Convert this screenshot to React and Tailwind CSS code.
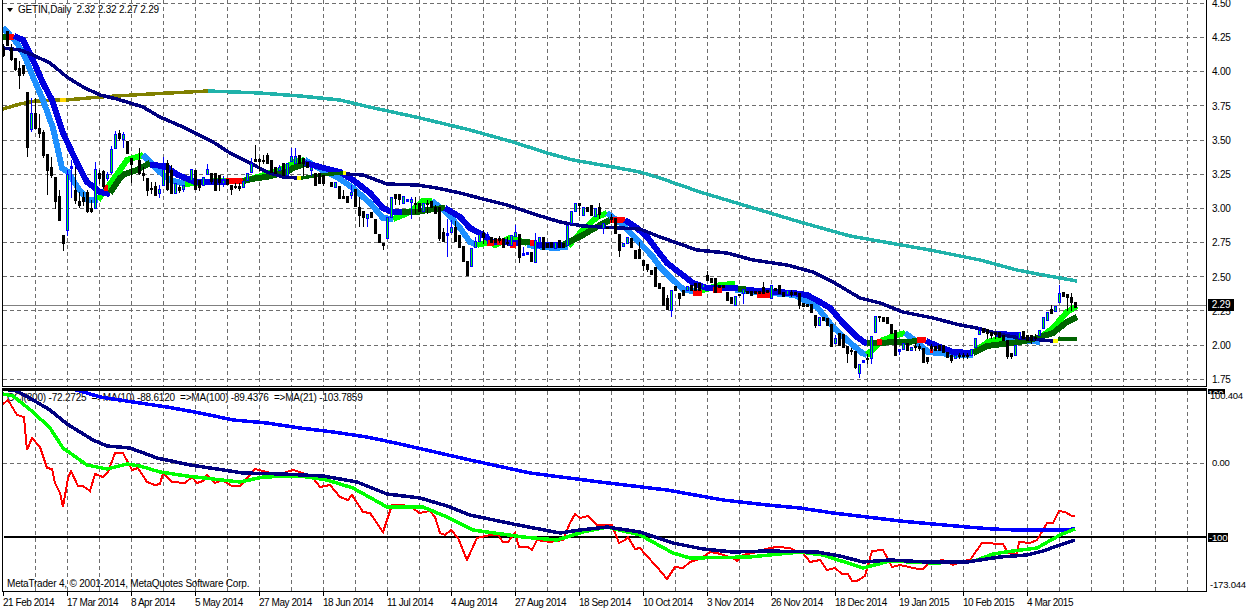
// GETIN daily chart (MetaTrader 4). All chart data is in page pixels.
const font = { fontFamily: '"Liberation Sans", sans-serif' }

const BLUE = "#0000e0"
const SKY = "#1e90ff"
const LIME = "#00ff00"
const GREEN = "#006400"
const RED = "#ff0000"
const NAVY = "#000080"

const fastBand = [
    [SKY, [[3, 28], [8, 33], [17, 43], [25, 57], [33, 77], [43, 100], [53, 128], [62, 168], [68, 172], [78, 188], [88, 200], [98, 200]]],
    [LIME, [[98, 200], [100, 197], [113, 180], [127, 160], [143, 155]]],
    [SKY, [[143, 155], [153, 165], [160, 172], [170, 180], [185, 184]]],
    [LIME, [[185, 184], [215, 181], [240, 181], [248, 180], [280, 170], [295, 162], [305, 160]]],
    [SKY, [[305, 160], [322, 170], [337, 177], [353, 188], [370, 203], [383, 218], [393, 219]]],
    [LIME, [[393, 219], [410, 212], [423, 201], [432, 201]]],
    [SKY, [[432, 201], [447, 213], [460, 228], [470, 242], [477, 245]]],
    [LIME, [[477, 245], [490, 242], [495, 245], [510, 238], [527, 243]]],
    [SKY, [[527, 245], [553, 248], [568, 247]]],
    [LIME, [[568, 246], [583, 230], [597, 217], [607, 213]]],
    [SKY, [[607, 213], [623, 225], [637, 240], [653, 257], [660, 267], [673, 280], [683, 289], [700, 293]]],
    [LIME, [[700, 291], [720, 285], [735, 284]]],
    [SKY, [[735, 290], [795, 295], [817, 307], [833, 327], [847, 340], [862, 353], [867, 355]]],
    [LIME, [[867, 355], [883, 340], [897, 335], [905, 333]]],
    [SKY, [[905, 333], [917, 342], [928, 352], [960, 355], [973, 355]]],
    [LIME, [[973, 353], [988, 342], [1005, 337]]],
    [SKY, [[1005, 338], [1040, 342]]],
    [LIME, [[1040, 338], [1053, 328], [1067, 312], [1077, 306]]],
]

const slowBand = [
    [GREEN, [[3, 37], [9, 37]]],
    [RED, [[9, 37], [14, 37]]],
    [BLUE, [[14, 36], [23, 40], [33, 60], [43, 83], [52, 100], [63, 133], [77, 163], [87, 182], [100, 192], [110, 194]]],
    [RED, [[104, 188], [108, 188]]],
    [GREEN, [[110, 193], [120, 178], [125, 174], [137, 170], [150, 163]]],
    [BLUE, [[150, 165], [165, 166], [178, 175], [195, 182], [226, 182]]],
    [RED, [[226, 181], [243, 181]]],
    [GREEN, [[243, 181], [257, 178], [267, 177], [287, 172], [293, 168], [305, 164]]],
    [BLUE, [[305, 163], [320, 167], [340, 172], [353, 180], [370, 193], [383, 208], [392, 212], [402, 212]]],
    [GREEN, [[402, 212], [417, 212], [433, 209], [445, 208]]],
    [BLUE, [[445, 208], [460, 217], [470, 228], [483, 235], [493, 242], [520, 243]]],
    [RED, [[487, 243], [494, 243]]],
    [RED, [[497, 242], [502, 242]]],
    [RED, [[510, 245], [516, 245]]],
    [GREEN, [[518, 242], [530, 242]]],
    [RED, [[530, 243], [537, 243]]],
    [BLUE, [[537, 245], [563, 245]]],
    [GREEN, [[563, 245], [583, 235], [600, 225], [610, 220]]],
    [RED, [[610, 220], [625, 220]]],
    [BLUE, [[625, 220], [637, 228], [648, 238], [657, 250], [667, 263], [680, 273], [693, 283], [707, 288], [738, 288]]],
    [RED, [[693, 293], [702, 293]]],
    [RED, [[713, 290], [722, 290]]],
    [GREEN, [[738, 289], [746, 289]]],
    [BLUE, [[746, 290], [793, 293], [807, 295], [820, 302], [830, 308], [843, 323], [857, 337], [867, 344]]],
    [RED, [[757, 295], [772, 295]]],
    [GREEN, [[867, 343], [907, 342], [917, 341]]],
    [RED, [[877, 342], [882, 342]]],
    [RED, [[917, 340], [926, 340]]],
    [BLUE, [[926, 341], [940, 347], [953, 352], [973, 353]]],
    [RED, [[930, 350], [933, 350]]],
    [BLUE, [[995, 334], [1018, 335]]],
    [GREEN, [[973, 353], [987, 346], [1003, 344], [1020, 342], [1037, 338], [1053, 333], [1067, 322], [1077, 317]]],
]

const navyMa = [
    [NAVY, [[3, 48], [20, 50], [33, 55], [50, 63], [67, 77], [83, 87], [100, 95], [117, 99], [143, 107], [160, 117], [183, 127], [213, 142], [230, 153], [250, 163], [267, 172], [283, 177], [297, 178]]],
    ["#ffff00", [[297, 178], [301, 178]]],
    [GREEN, [[301, 178], [320, 175], [343, 173]]],
    ["#ffff00", [[343, 173], [346, 173]]],
    [NAVY, [[346, 174], [363, 175], [387, 184], [417, 185], [437, 188], [460, 193], [487, 200], [507, 205], [537, 215], [560, 222], [583, 226], [620, 228], [640, 229], [660, 237], [697, 250], [727, 253], [753, 260], [787, 265], [813, 272], [833, 282], [860, 298], [880, 303], [903, 312], [933, 318], [960, 325], [977, 328], [1003, 335], [1020, 338], [1053, 341]]],
    ["#ffff00", [[1053, 341], [1058, 341]]],
    [GREEN, [[1058, 339], [1077, 339]]],
]

const longMa = [
    ["#808000", [[3, 109], [20, 104], [35, 101], [60, 100]]],
    ["#ffd700", [[60, 100], [66, 100]]],
    ["#808000", [[66, 100], [100, 97], [150, 94], [208, 91]]],
    ["#20b2aa", [[208, 91], [260, 93], [300, 96], [340, 100], [365, 106], [420, 118], [470, 130], [513, 142], [547, 153], [573, 160], [613, 167], [640, 172], [660, 178], [700, 192], [750, 207], [800, 222], [850, 236], [930, 250], [980, 260], [1017, 270], [1043, 275], [1077, 281]]],
]

// [x, bodyTop, bodyBottom, wickTop, wickBottom, up]
const candles = [
    [3, 48, 55, 44, 56], [7, 31, 45], [11, 48, 59, 44, 60], [15, 58, 69, 58, 70], [19, 68, 75, 61, 88], [23, 65, 73, 65, 75],
    [27, 92, 147, 92, 156], [31, 113, 129, 98, 131, 1], [35, 113, 128, 98, 128], [39, 128, 133, 114, 137], [43, 132, 155, 130, 157], [47, 154, 170, 154, 194],
    [51, 167, 175, 157, 177], [55, 177, 201, 177, 208], [59, 196, 220, 190, 220], [63, 235, 243, 235, 250], [67, 174, 230, 170, 235, 1], [71, 166, 168, 160, 197, 1],
    [75, 190, 200, 167, 203], [79, 201, 205, 192, 207], [83, 197, 201, 192, 205], [87, 192, 211, 190, 212], [91, 208, 211, 200, 212], [95, 169, 208, 162, 208, 1],
    [99, 173, 178, 170, 183], [103, 171, 186, 170, 188], [107, 174, 178, 172, 180, 1], [111, 149, 172, 146, 173, 1], [115, 134, 148, 131, 148, 1], [119, 133, 138, 130, 140],
    [123, 134, 139, 132, 147, 1], [127, 141, 153], [131, 158, 164, 158, 182], [139, 160, 173, 148, 174], [143, 173, 175, 167, 180], [147, 178, 190, 178, 195],
    [151, 188, 189, 182, 193], [155, 186, 195, 182, 195], [159, 189, 193, 185, 197, 1], [163, 169, 185, 157, 185, 1], [167, 163, 189, 160, 190], [171, 170, 193, 165, 193],
    [175, 183, 193, 183, 193, 1], [179, 187, 190, 185, 192], [183, 185, 189, 185, 191, 1], [191, 169, 180, 169, 180, 1], [195, 170, 189], [199, 180, 187, 180, 190],
    [203, 177, 185, 177, 185, 1], [207, 169, 174, 164, 174, 1], [211, 173, 181, 173, 183], [215, 173, 190], [219, 175, 182, 175, 190], [223, 180, 183, 176, 186, 1],
    [227, 179, 184], [231, 185, 189, 185, 194], [235, 186, 187, 183, 188], [239, 186, 188, 183, 190], [243, 181, 187, 181, 187, 1], [247, 173, 180, 173, 180, 1],
    [251, 163, 172, 158, 172, 1], [255, 159, 161, 145, 161], [259, 159, 161, 158, 170], [263, 160, 161, 155, 163], [267, 155, 163, 153, 163], [271, 160, 172],
    [275, 167, 173], [279, 167, 170, 165, 170, 1], [283, 163, 175], [287, 163, 175, 163, 175, 1], [291, 156, 161, 148, 161, 1], [295, 156, 163, 148, 163, 1],
    [299, 155, 163], [303, 158, 163, 158, 175], [307, 162, 167], [311, 167, 170, 167, 175, 1], [315, 173, 185], [319, 173, 183], [323, 175, 183, 175, 185],
    [331, 182, 186], [335, 182, 187, 182, 187, 1], [339, 186, 198], [343, 196, 198, 190, 198], [347, 196, 202], [351, 192, 195, 185, 198, 1], [355, 189, 206],
    [359, 207, 215, 197, 226], [363, 211, 217, 211, 226], [367, 214, 218, 214, 226, 1], [371, 212, 217], [375, 219, 233], [379, 234, 242], [383, 243, 245, 243, 249],
    [387, 217, 238, 217, 238, 1], [391, 197, 217, 197, 217, 1], [395, 194, 198, 194, 204], [399, 194, 199, 194, 204], [403, 196, 203, 196, 203, 1], [407, 199, 201, 199, 201, 1],
    [411, 199, 202, 197, 218, 1], [415, 203, 204, 197, 213], [419, 203, 211], [423, 203, 211, 203, 211, 1], [427, 203, 204, 200, 213], [431, 201, 207], [435, 207, 213, 205, 213],
    [439, 207, 238, 207, 240], [443, 232, 241, 228, 241], [447, 233, 235, 219, 256, 1], [451, 227, 232, 220, 232, 1], [455, 227, 241, 221, 241], [459, 235, 247], [463, 246, 261],
    [467, 261, 275], [471, 248, 266, 248, 266, 1], [475, 241, 247, 237, 247, 1], [479, 234, 241, 234, 241, 1], [483, 233, 237, 230, 243], [487, 234, 236, 232, 243, 1],
    [491, 237, 242], [495, 238, 242], [499, 238, 240, 236, 242], [503, 238, 247], [507, 242, 243, 237, 245], [511, 235, 245, 235, 245, 1], [515, 232, 236, 225, 236, 1],
    [519, 234, 257, 234, 262], [523, 253, 255, 247, 255, 1], [527, 252, 254, 252, 254, 1], [531, 252, 261], [535, 240, 262, 233, 262, 1], [539, 237, 242, 237, 248, 1],
    [543, 237, 249], [547, 243, 247], [551, 242, 247], [555, 242, 248, 242, 248, 1], [559, 240, 247], [563, 243, 247], [567, 225, 245, 225, 245, 1], [571, 211, 223, 211, 223, 1],
    [575, 203, 211, 203, 211, 1], [579, 203, 205, 203, 215], [583, 207, 215, 207, 215, 1], [587, 207, 211], [591, 205, 215], [595, 208, 216, 208, 216, 1], [599, 207, 214, 203, 218],
    [603, 223, 228, 223, 233, 1], [607, 227, 228], [611, 217, 219, 214, 222], [615, 218, 233], [619, 234, 250, 234, 256], [623, 243, 246, 243, 246, 1], [627, 237, 243, 237, 243, 1],
    [631, 238, 247], [635, 250, 258], [639, 249, 258, 242, 258], [643, 260, 265, 260, 270], [647, 264, 269, 264, 271], [651, 270, 274], [655, 267, 286], [659, 283, 288],
    [663, 287, 305], [667, 298, 309, 295, 309], [671, 290, 310, 290, 316, 1], [675, 286, 290], [679, 293, 298, 293, 305], [683, 290, 295], [687, 286, 290, 286, 290, 1],
    [691, 285, 290], [695, 283, 290], [699, 283, 290], [703, 284, 287, 284, 287, 1], [707, 275, 280, 271, 280], [711, 278, 282], [715, 278, 292], [719, 285, 287],
    [723, 285, 287], [727, 292, 300], [731, 297, 303], [735, 296, 305, 296, 305, 1], [739, 294, 295], [743, 289, 293, 289, 303, 1], [747, 291, 293], [751, 291, 295],
    [755, 291, 293], [759, 291, 293], [763, 287, 293, 282, 293], [767, 290, 292], [771, 285, 298, 285, 298, 1], [775, 288, 290], [779, 285, 293], [783, 292, 296], [787, 290, 294, 290, 294, 1],
    [791, 292, 294, 290, 296], [795, 292, 294], [799, 293, 305, 293, 308], [803, 303, 306], [807, 304, 306], [811, 304, 312], [815, 315, 325, 315, 327], [819, 317, 325, 317, 325, 1],
    [823, 317, 320], [827, 318, 325], [831, 324, 346], [835, 338, 343, 335, 343, 1], [839, 333, 345], [843, 334, 347], [847, 346, 353, 346, 362], [851, 350, 351, 348, 354],
    [855, 351, 367, 351, 368], [859, 364, 373, 364, 377, 1], [863, 360, 362, 360, 362, 1], [867, 358, 359, 354, 363], [871, 336, 358, 336, 363, 1], [875, 316, 332, 316, 332, 1],
    [879, 316, 317, 316, 321], [883, 317, 321], [887, 317, 323], [891, 324, 333], [895, 330, 355], [899, 349, 351, 349, 354, 1], [903, 343, 349, 343, 349, 1], [907, 343, 350],
    [911, 347, 350, 347, 350, 1], [915, 346, 347, 343, 350], [919, 346, 348, 344, 350], [923, 348, 362], [927, 357, 361, 357, 363], [931, 346, 348, 344, 350], [935, 346, 350],
    [939, 345, 350], [943, 345, 352], [947, 352, 357], [951, 355, 360, 355, 362], [955, 355, 358, 355, 358, 1], [959, 355, 356, 353, 358], [963, 355, 356, 353, 358], [967, 355, 356, 353, 358],
    [971, 349, 355, 349, 355, 1], [975, 338, 347, 338, 347, 1], [979, 330, 334, 327, 334, 1], [983, 328, 332], [987, 329, 333, 329, 338], [991, 332, 335, 332, 338], [995, 332, 334, 332, 338],
    [999, 332, 337], [1003, 335, 340], [1007, 340, 356, 340, 358], [1011, 353, 356, 353, 358], [1015, 345, 355, 345, 355, 1], [1019, 332, 338, 332, 338, 1], [1023, 331, 338], [1027, 335, 340],
    [1031, 335, 340, 335, 343], [1035, 337, 338, 334, 340], [1039, 330, 335, 330, 335, 1], [1043, 317, 328, 317, 328, 1], [1047, 312, 320, 312, 320, 1], [1051, 309, 313, 305, 313],
    [1055, 306, 311, 306, 311, 1], [1059, 293, 302, 285, 302, 1], [1063, 292, 296], [1067, 294, 297, 294, 310], [1071, 297, 302, 293, 310], [1075, 302, 307],
]

const cciRed = [[3, 404], [8, 400], [17, 415], [24, 417], [27, 450], [32, 438], [40, 447], [47, 468], [52, 469], [55, 483], [60, 493], [63, 507], [68, 478], [71, 471], [78, 486], [83, 486], [90, 491], [95, 474], [103, 477], [108, 472], [115, 453], [123, 453], [132, 470], [138, 468], [147, 482], [155, 485], [160, 484], [163, 473], [172, 482], [185, 483], [192, 477], [197, 483], [203, 481], [207, 475], [215, 483], [222, 480], [232, 486], [240, 486], [255, 469], [267, 472], [277, 475], [293, 470], [303, 473], [313, 478], [320, 487], [330, 485], [340, 497], [348, 500], [352, 495], [363, 512], [370, 513], [383, 532], [392, 505], [403, 505], [413, 508], [419, 513], [430, 511], [435, 517], [440, 533], [445, 535], [451, 530], [458, 538], [467, 560], [477, 538], [490, 535], [498, 535], [503, 542], [508, 542], [515, 533], [519, 547], [528, 547], [532, 550], [537, 540], [550, 542], [563, 540], [570, 523], [575, 514], [580, 518], [588, 516], [597, 525], [612, 525], [619, 543], [625, 540], [628, 537], [635, 549], [640, 548], [645, 554], [657, 567], [667, 579], [675, 567], [683, 568], [690, 562], [700, 559], [710, 552], [717, 553], [733, 558], [737, 561], [743, 555], [757, 552], [762, 550], [770, 548], [777, 547], [790, 548], [797, 552], [803, 553], [810, 562], [820, 560], [827, 570], [835, 568], [842, 574], [848, 574], [852, 581], [857, 581], [865, 576], [872, 551], [883, 550], [892, 567], [900, 565], [918, 569], [923, 569], [930, 562], [943, 560], [953, 565], [963, 561], [970, 560], [982, 543], [1003, 544], [1008, 553], [1017, 554], [1019, 542], [1030, 543], [1037, 540], [1043, 530], [1047, 523], [1053, 523], [1059, 511], [1065, 512], [1072, 516], [1075, 516]]
const cciLime = [[3, 394], [13, 396], [33, 412], [50, 428], [63, 448], [87, 465], [107, 469], [127, 464], [140, 466], [160, 472], [187, 476], [213, 479], [240, 482], [263, 477], [300, 476], [327, 480], [353, 488], [387, 507], [423, 507], [447, 517], [473, 530], [523, 537], [557, 540], [583, 532], [607, 527], [640, 535], [673, 553], [690, 558], [750, 557], [800, 552], [823, 555], [863, 568], [890, 561], [933, 563], [967, 562], [977, 560], [993, 554], [1013, 551], [1037, 548], [1060, 535], [1075, 529]]
const cciNavy = [[3, 389], [17, 391], [33, 400], [50, 410], [67, 424], [80, 432], [93, 440], [107, 446], [130, 448], [157, 458], [190, 465], [217, 469], [243, 473], [283, 474], [323, 476], [357, 482], [387, 494], [420, 498], [447, 506], [470, 515], [513, 524], [560, 533], [580, 530], [607, 527], [640, 532], [673, 543], [703, 549], [733, 552], [767, 551], [817, 552], [840, 556], [863, 562], [890, 560], [927, 562], [967, 562], [980, 560], [1000, 557], [1027, 555], [1043, 551], [1060, 545], [1075, 540]]
const cciBlue = [[63, 388], [77, 390], [100, 397], [133, 402], [167, 407], [200, 413], [233, 420], [267, 423], [300, 428], [333, 432], [367, 437], [400, 444], [470, 460], [530, 473], [600, 482], [667, 490], [723, 500], [767, 505], [800, 508], [833, 513], [867, 517], [900, 521], [933, 524], [967, 527], [993, 529], [1017, 530], [1060, 530], [1075, 529]]

const prices = ["4.50", "4.25", "4.00", "3.75", "3.50", "3.25", "3.00", "2.75", "2.50", "2.25", "2.00", "1.75"]
const dates = ["21 Feb 2014", "17 Mar 2014", "8 Apr 2014", "5 May 2014", "27 May 2014", "18 Jun 2014", "11 Jul 2014", "4 Aug 2014", "27 Aug 2014", "18 Sep 2014", "10 Oct 2014", "3 Nov 2014", "26 Nov 2014", "18 Dec 2014", "19 Jan 2015", "10 Feb 2015", "4 Mar 2015"]
const gridX = Array.from({ length: 37 }, (_, i) => 35 + i * 32)
const gridY = [3, 37, 71, 105, 140, 174, 208, 242, 276, 310, 345, 379]

function Line({ points, color, width }) {
    return (
        <polyline
            points={points.map((p) => p.join(",")).join(" ")}
            fill="none"
            stroke={color}
            strokeWidth={width}
            strokeLinejoin="miter"
            shapeRendering="crispEdges"
        />
    )
}

function Grid({ y1, y2, rows }) {
    return (
        <g stroke="#6e6e6e" strokeDasharray="4 3" shapeRendering="crispEdges">
            {gridX.map((x) => (
                <line key={x} x1={x + 0.5} x2={x + 0.5} y1={y1} y2={y2} />
            ))}
            {rows.map((y) => (
                <line key={y} x1={3} x2={1206} y1={y + 0.5} y2={y + 0.5} />
            ))}
        </g>
    )
}

function Candle({ c }) {
    const [x, t, b, wt = t, wb = b, up] = c
    return (
        <g shapeRendering="crispEdges">
            <rect x={x} y={wt} width={1} height={wb - wt + 1} fill={up ? "#0000ff" : "#000000"} />
            <rect x={x - 1} y={t} width={3} height={b - t + 1} fill={up ? "#0000ff" : "#000000"} />
            {up && b - t > 2 ? <rect x={x} y={t + 1} width={1} height={b - t - 1} fill="#00ff00" /> : null}
        </g>
    )
}

export default function App() {
    return (
        <div className="w-[1246px] h-[609px] bg-white text-black text-[10px] tracking-[-0.2px] leading-none overflow-hidden" style={font}>
            {/* price pane */}
            <div className="flex h-[387px]">
                <div className="relative ml-[2px] w-[1205px] border-l border-r border-b border-black">
                    <div className="absolute left-[4px] top-[5px] flex items-center gap-[5px] whitespace-pre">
                        <span className="w-0 h-0 border-l-[3px] border-r-[3px] border-t-[4px] border-l-transparent border-r-transparent border-t-black" />
                        <span>GETIN,Daily  2.32 2.32 2.27 2.29</span>
                    </div>
                    <svg className="relative block" width="1203" height="386" viewBox="3 0 1203 386">
                        <Grid y1={0} y2={386} rows={gridY} />
                        <line x1={3} x2={1206} y1={305.5} y2={305.5} stroke="#808080" shapeRendering="crispEdges" />
                        {longMa.map(([color, pts], i) => <Line key={i} points={pts} color={color} width={3.5} />)}
                        {fastBand.map(([color, pts], i) => <Line key={i} points={pts} color={color} width={6} />)}
                        {slowBand.map(([color, pts], i) => <Line key={i} points={pts} color={color} width={6} />)}
                        {navyMa.map(([color, pts], i) => <Line key={i} points={pts} color={color} width={3.5} />)}
                        {candles.map((c) => <Candle key={c[0]} c={c} />)}
                    </svg>
                </div>
                <div className="relative flex-1 pl-[5px]">
                    <div className="flex flex-col">
                        {prices.map((p) => (
                            <div key={p} className="h-[34.2px] -translate-y-[13.5px] flex items-center">{p}</div>
                        ))}
                    </div>
                    <div className="absolute left-[1px] top-[299px] w-[26px] h-[12px] bg-black text-white flex items-center justify-center">2.29</div>
                </div>
            </div>

            {/* CCI pane */}
            <div className="flex h-[204px] mt-[1px]">
                <div className="relative ml-[2px] w-[1205px] border-l border-r border-b border-t-[3px] border-black">
                    <div className="absolute left-[4px] top-[2px] whitespace-pre">CCI(300) -72.2725  =&gt;MA(10) -88.6120  =&gt;MA(100) -89.4376  =&gt;MA(21) -103.7859</div>
                    <svg className="relative block" width="1203" height="200" viewBox="3 391 1203 200">
                        <Grid y1={391} y2={591} rows={[463]} />
                        <line x1={4} x2={1206} y1={537} y2={537} stroke="#000000" strokeWidth={2} shapeRendering="crispEdges" />
                        <Line points={cciRed} color="#ff0000" width={2} />
                        <Line points={cciBlue} color="#0000ff" width={3.5} />
                        <Line points={cciLime} color="#00ff00" width={3.5} />
                        <Line points={cciNavy} color="#000080" width={3.5} />
                    </svg>
                    <div className="absolute left-[4px] top-[188px]">MetaTrader 4, © 2001-2014, MetaQuotes Software Corp.</div>
                </div>
                <div className="relative flex-1 flex flex-col pt-[3px] text-[9.5px]">
                    <div className="absolute left-[1px] top-[1px] w-[17px] h-[5px] bg-black text-white overflow-hidden">100</div>
                    <div className="relative h-[67px] pl-[3px]">100.404</div>
                    <div className="h-[75px] pl-[5px]">0.00</div>
                    <div className="h-[47px] pl-[1px]">
                        <span className="inline-block bg-black text-white px-[1px] h-[9px]">-100</span>
                    </div>
                    <div className="pl-[3px]">-173.044</div>
                </div>
            </div>

            {/* time axis */}
            <div className="flex pl-[3px] tracking-[-0.45px]">
                {dates.map((d) => (
                    <div key={d} className="w-[64px] shrink-0 flex flex-col whitespace-nowrap">
                        <div className="w-px h-[4px] bg-black" />
                        <div className="mt-[2px]">{d}</div>
                    </div>
                ))}
            </div>
        </div>
    )
}
